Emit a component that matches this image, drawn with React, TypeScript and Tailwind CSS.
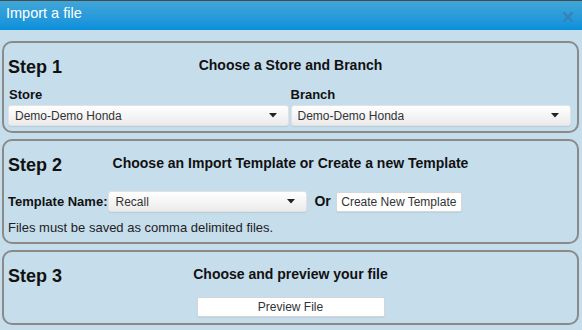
import React from "react";

function Caret() {
  return (
    <svg width="8" height="5" viewBox="0 0 8 5" className="shrink-0">
      <path d="M0 0 L8 0 L4 4.5 Z" fill="#222" />
    </svg>
  );
}

function Select({ value, className = "" }: { value: string; className?: string }) {
  return (
    <div
      className={`flex h-[21px] items-center justify-between rounded-[3px] border border-[#e2e2e2] bg-gradient-to-b from-white to-[#ebebeb] pl-[6px] pr-[11px] text-[12px] text-[#333] shadow-[0_1px_1px_rgba(0,0,0,0.08)] ${className}`}
    >
      <span className="truncate">{value}</span>
      <Caret />
    </div>
  );
}

function StepHeader({ step, title }: { step: string; title: string }) {
  return (
    <div className="grid grid-cols-[1fr_auto_1fr] items-start">
      <span className="text-[18px] font-bold leading-[20px] text-[#111]">{step}</span>
      <span className="text-[14px] font-bold leading-[16px] text-[#111]">{title}</span>
      <span />
    </div>
  );
}

function Panel({ children, className = "" }: { children: React.ReactNode; className?: string }) {
  return (
    <div className={`ml-[2px] mr-[3px] rounded-[10px] border-2 border-[#8a8a8a] px-[4px] pt-[14px] ${className}`}>
      {children}
    </div>
  );
}

export default function App() {
  return (
    <div
      className="h-[330px] w-[582px] overflow-hidden bg-[#c6ddec]"
      style={{ fontFamily: '"Liberation Sans", Arial, sans-serif' }}
    >
      <div className="flex h-[30px] justify-between border-t border-[#4a4a4a] bg-gradient-to-b from-[#40a6d8] to-[#0590db]">
        <span className="pl-[6px] pt-[4px] text-[14.5px] leading-[16px] text-white">Import a file</span>
        <div className="pr-[9px] pt-[11px]">
          <svg width="10" height="10" viewBox="0 0 10 10">
            <path d="M1 1 L9 9 M9 1 L1 9" stroke="#3583b6" strokeWidth="2.4" strokeLinecap="square" />
          </svg>
        </div>
      </div>

      <div className="pt-[11px]">
        <Panel className="pb-[5px]">
          <StepHeader step="Step 1" title="Choose a Store and Branch" />
          <div className="mt-[10px] grid grid-cols-2 gap-[2px] pr-[2px]">
            <div>
              <div className="pl-[1px] text-[13px] font-bold leading-[16px] text-[#111]">Store</div>
              <Select value="Demo-Demo Honda" className="mt-[2px]" />
            </div>
            <div>
              <div className="text-[13px] font-bold leading-[16px] text-[#111]">Branch</div>
              <Select value="Demo-Demo Honda" className="mt-[2px]" />
            </div>
          </div>
        </Panel>

        <Panel className="mt-[6px] pb-[7px]">
          <StepHeader step="Step 2" title="Choose an Import Template or Create a new Template" />
          <div className="mt-[16px] flex items-center">
            <span className="text-[13px] font-bold leading-[16px] text-[#111]">Template Name:</span>
            <Select value="Recall" className="ml-[1px] w-[199px]" />
            <span className="ml-[7px] text-[14px] font-bold text-[#111]">Or</span>
            <button className="ml-[5px] h-[20px] w-[126px] rounded-[2px] border border-[#d6d6d6] bg-white text-[12px] leading-[18px] text-[#333] shadow-[0_1px_1px_rgba(0,0,0,0.06)]">
              Create New Template
            </button>
          </div>
          <p className="mt-[8px] text-[13px] leading-[15px] text-[#222]">Files must be saved as comma delimited files.</p>
        </Panel>

        <Panel className="mt-[6px] pb-[6px]">
          <StepHeader step="Step 3" title="Choose and preview your file" />
          <div className="mt-[11px] flex justify-center">
            <button className="h-[20px] w-[188px] rounded-[2px] border border-[#d6d6d6] bg-white text-[12px] leading-[18px] text-[#333] shadow-[0_1px_1px_rgba(0,0,0,0.06)]">
              Preview File
            </button>
          </div>
        </Panel>
      </div>
    </div>
  );
}
